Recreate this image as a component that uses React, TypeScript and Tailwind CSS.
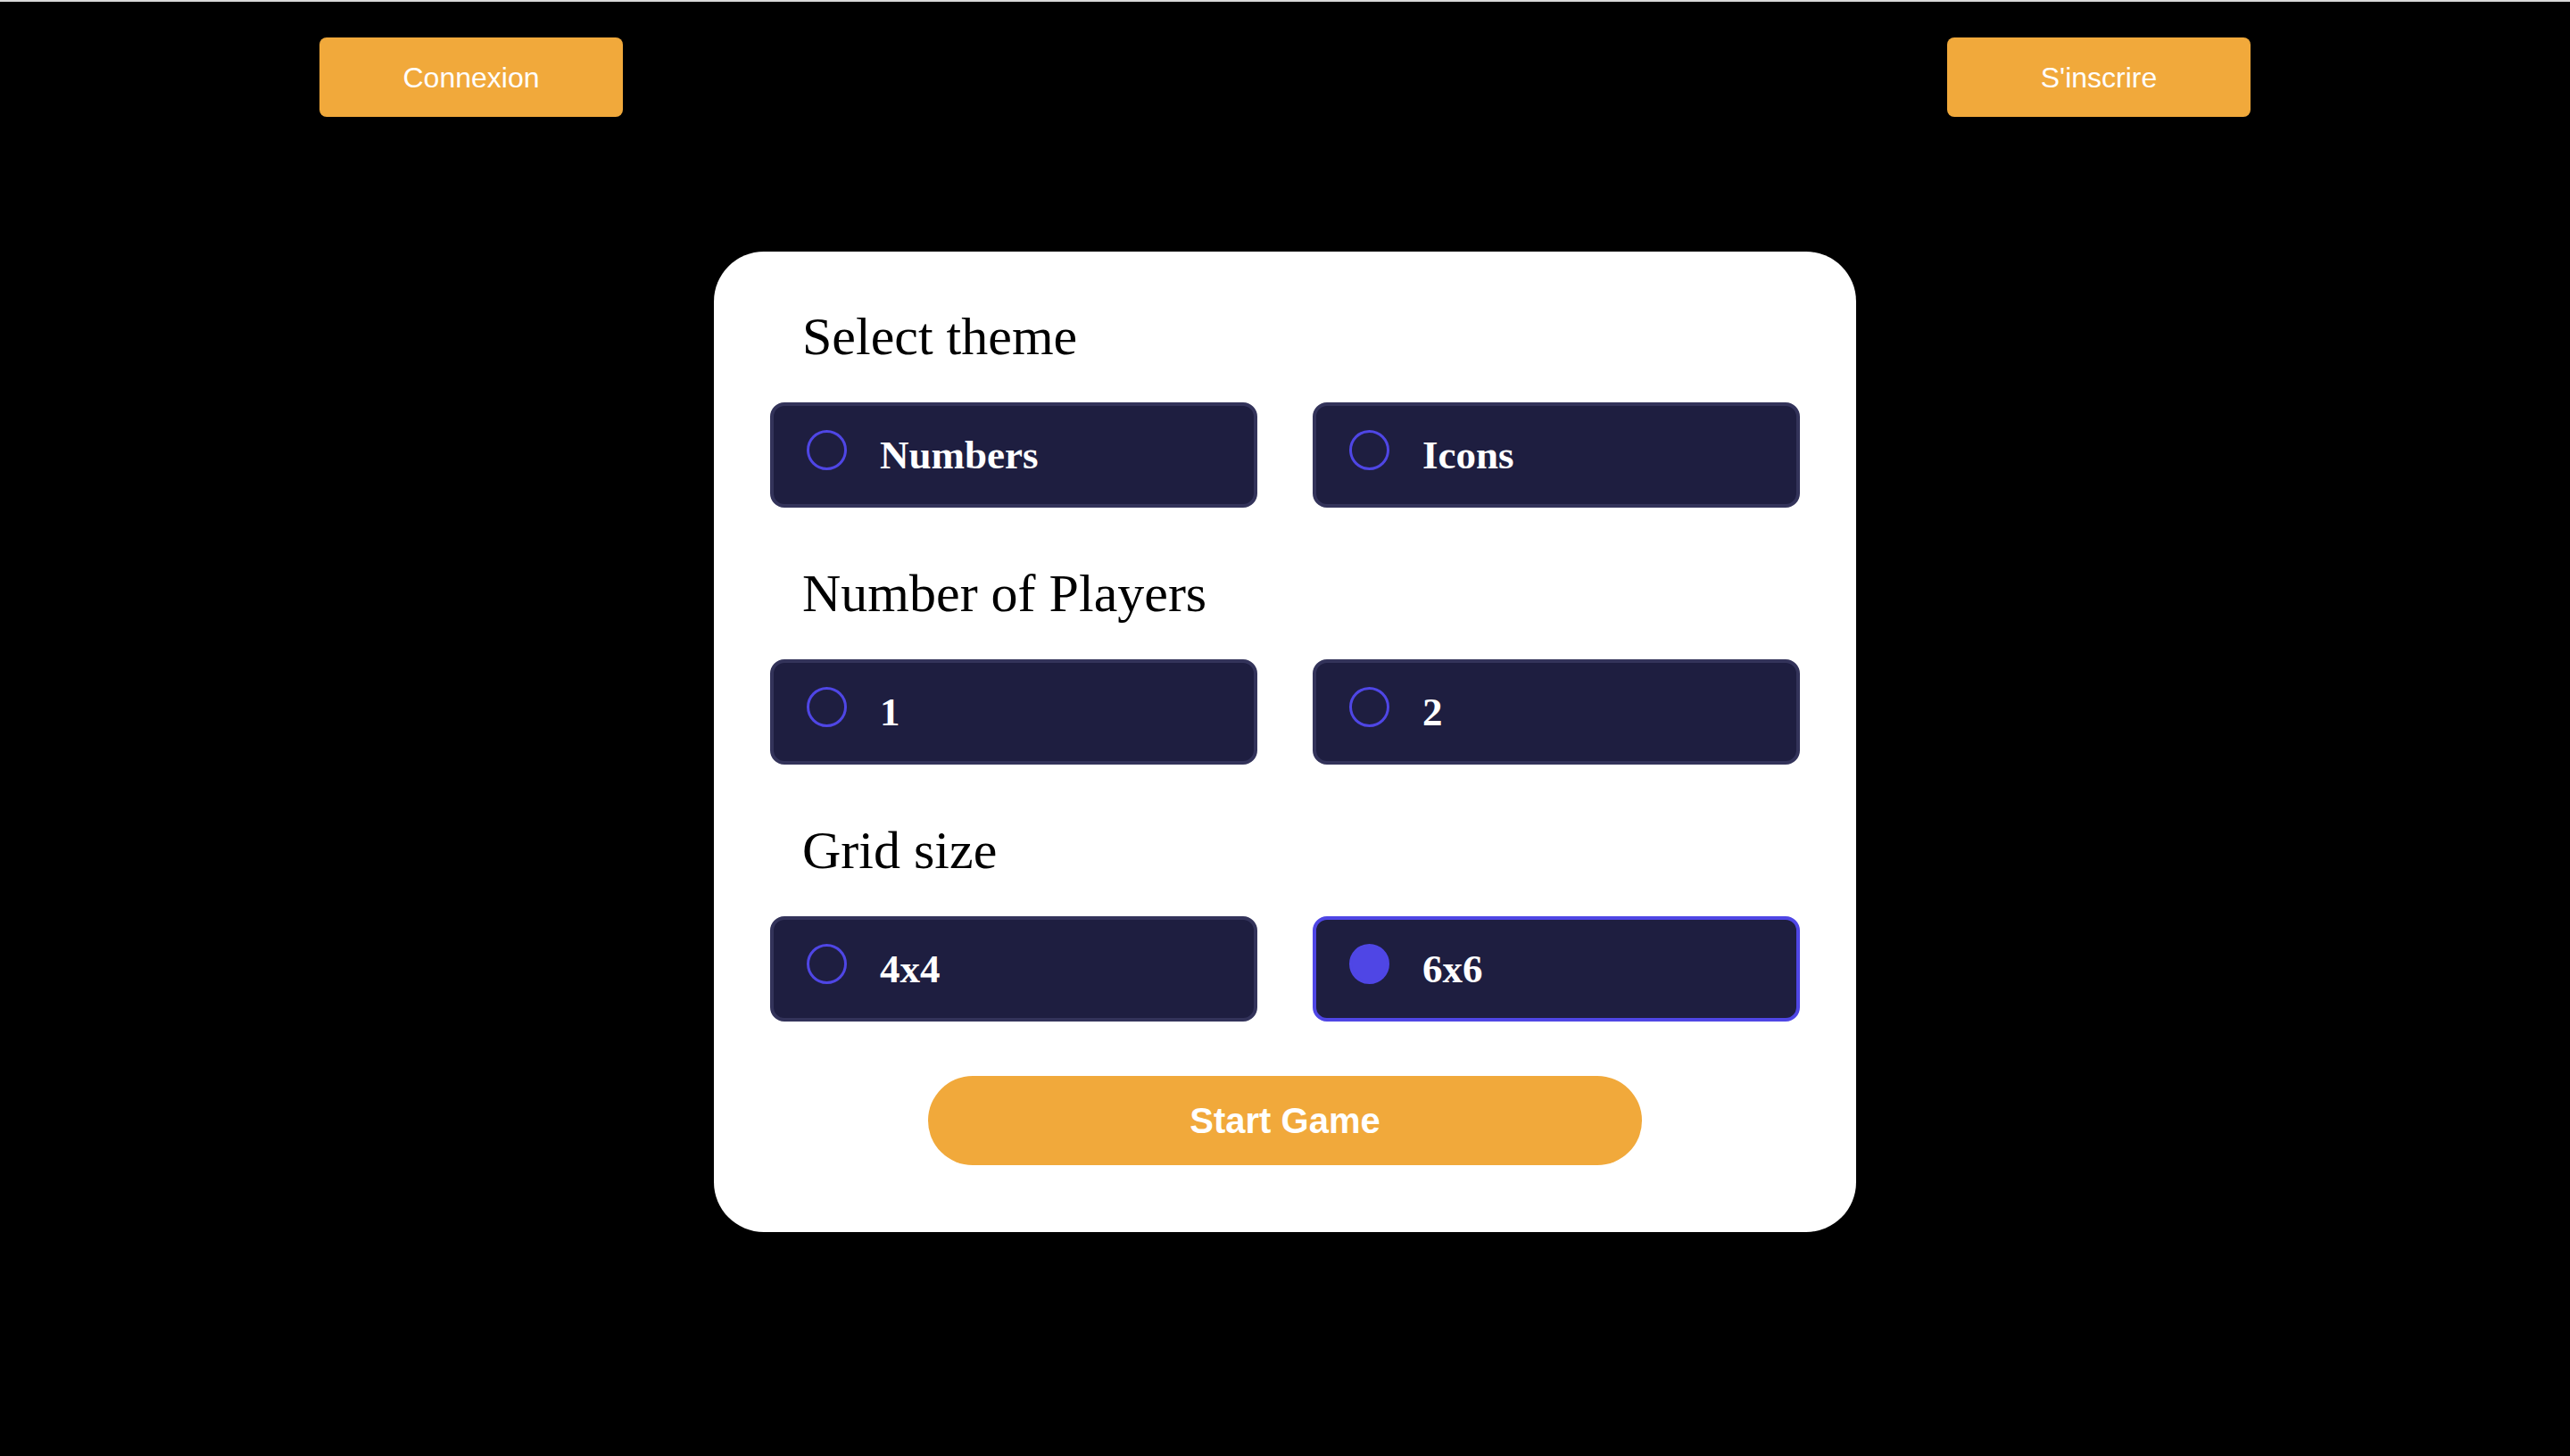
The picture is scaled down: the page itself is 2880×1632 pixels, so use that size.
import { useState } from "react";

type Option = { value: string; label: string };

const themes: Option[] = [
  { value: "numbers", label: "Numbers" },
  { value: "icons", label: "Icons" },
];

const players: Option[] = [
  { value: "1", label: "1" },
  { value: "2", label: "2" },
];

const grids: Option[] = [
  { value: "4x4", label: "4x4" },
  { value: "6x6", label: "6x6" },
];

function OptionGroup({
  title,
  options,
  selected,
  onSelect,
}: {
  title: string;
  options: Option[];
  selected: string | null;
  onSelect: (v: string) => void;
}) {
  return (
    <section>
      <h2 className="ml-[36px] font-['Liberation_Serif',serif] text-[60px] font-normal leading-[60px] text-black">
        {title}
      </h2>
      <div className="mt-[44px] grid grid-cols-2 gap-[62px]">
        {options.map((opt) => {
          const active = selected === opt.value;
          return (
            <button
              key={opt.value}
              type="button"
              onClick={() => onSelect(opt.value)}
              className={
                active
                  ? "flex h-[118px] items-center gap-[37px] rounded-[16px] border-4 border-[#4f46e5] bg-[#1e1e40] pl-[37px] text-left"
                  : "flex h-[118px] items-center gap-[37px] rounded-[16px] border-4 border-[#33335a] bg-[#1e1e40] pl-[37px] text-left"
              }
            >
              <span
                className={
                  active
                    ? "mb-[12px] h-[45px] w-[45px] shrink-0 rounded-full border-[3px] border-[#4f46e5] bg-[#4f46e5]"
                    : "mb-[12px] h-[45px] w-[45px] shrink-0 rounded-full border-[3px] border-[#4f46e5]"
                }
              />
              <span className="font-['Liberation_Serif',serif] text-[45px] font-bold leading-[45px] text-white">
                {opt.label}
              </span>
            </button>
          );
        })}
      </div>
    </section>
  );
}

export default function App() {
  const [theme, setTheme] = useState<string | null>(null);
  const [playerCount, setPlayerCount] = useState<string | null>(null);
  const [grid, setGrid] = useState<string | null>("6x6");

  return (
    <div className="min-h-screen border-t-2 border-[#d9d9d9] bg-black font-['Liberation_Sans',Arial,sans-serif]">
      <header className="flex items-center justify-between px-[358px] pt-[40px]">
        <button className="h-[89px] w-[340px] rounded-[8px] bg-[#f1a93b] text-[32px] text-white">
          Connexion
        </button>
        <button className="h-[89px] w-[340px] rounded-[8px] bg-[#f1a93b] text-[32px] text-white">
          S'inscrire
        </button>
      </header>

      <main className="mx-auto mt-[151px] w-[1280px] rounded-[56px] bg-white px-[63px] pb-[75px] pt-[65px]">
        <div className="flex flex-col gap-[66px]">
          <OptionGroup title="Select theme" options={themes} selected={theme} onSelect={setTheme} />
          <OptionGroup
            title="Number of Players"
            options={players}
            selected={playerCount}
            onSelect={setPlayerCount}
          />
          <OptionGroup title="Grid size" options={grids} selected={grid} onSelect={setGrid} />
        </div>
        <div className="mt-[61px] flex justify-center">
          <button className="h-[100px] w-[800px] rounded-full bg-[#f1a93b] text-[40px] font-bold text-white">
            Start Game
          </button>
        </div>
      </main>
    </div>
  );
}
